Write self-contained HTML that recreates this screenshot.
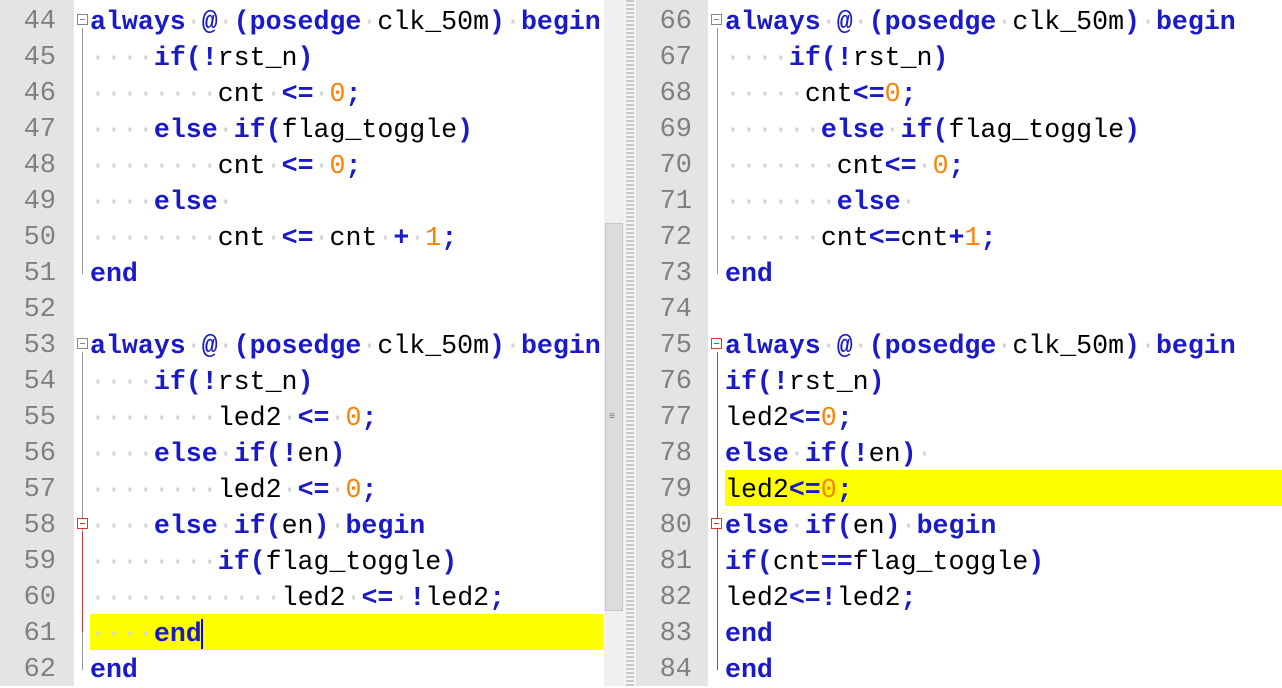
<!DOCTYPE html><html><head><meta charset="utf-8"><style>
body{margin:0;width:1282px;height:686px;overflow:hidden;background:#fff;font-family:"Liberation Mono",monospace;}
.p{position:absolute;top:0;height:686px;}
.g{background:#e4e4e4;}
.ln{position:absolute;left:0;width:56px;text-align:right;color:#808080;font-size:27px;line-height:36px;}
.c{position:absolute;font-size:26.6px;line-height:36px;white-space:pre;color:#000;}
.k{color:#1a1ac8;font-weight:bold}
.n{color:#ff8000}
.d{color:#d4d4d4}
.hl{position:absolute;background:#ffff00;height:36px}
.fl{position:absolute;width:1px}
</style></head><body>
<div class="p g" style="left:0;width:74px"></div>
<div class="p" style="left:604px;width:20px;background:#f0f0f0"></div>
<div style="position:absolute;left:605px;top:223px;width:18px;height:388px;background:#dcdcdc;border:1px solid #c8c8c8;box-sizing:border-box"></div>
<div style="position:absolute;left:609px;top:412px;color:#777;font-size:10px">≡</div>
<div class="p" style="left:624px;width:12px;background:repeating-linear-gradient(#c8c8c8 0 2px,#f4f4f4 2px 4px);border-left:2px solid #f4f4f4;border-right:2px solid #f4f4f4;box-sizing:border-box"></div>
<div class="p g" style="left:636px;width:72px"></div>
<div class="hl" style="left:90px;top:614px;width:513px"></div>
<div class="hl" style="left:725px;top:470px;width:557px"></div>
<div class="fl" style="left:82px;top:28px;height:246px;background:#999"></div>
<div class="fl" style="left:82px;top:352px;height:318px;background:#999"></div>
<div class="fl" style="left:82px;top:532px;height:100px;background:#d33"></div>
<div class="fl" style="left:717px;top:28px;height:246px;background:#999"></div>
<div class="fl" style="left:717px;top:352px;height:318px;background:#d33"></div>
<div id="L"></div>
<script>
function s(t){return t.replace(/ /g,'<span class="d">·</span>');}
function K(t){return '<span class="k">'+t+'</span>';}
function N(t){return '<span class="n">'+t+'</span>';}
const left=[
K('always')+s(' ')+K('@')+s(' ')+K('(posedge')+s(' ')+'clk_50m'+K(')')+s(' ')+K('begin'),
s('    ')+K('if(!')+'rst_n'+K(')'),
s('        ')+'cnt'+s(' ')+K('&lt;=')+s(' ')+N('0')+K(';'),
s('    ')+K('else')+s(' ')+K('if(')+'flag_toggle'+K(')'),
s('        ')+'cnt'+s(' ')+K('&lt;=')+s(' ')+N('0')+K(';'),
s('    ')+K('else')+s(' '),
s('        ')+'cnt'+s(' ')+K('&lt;=')+s(' ')+'cnt'+s(' ')+K('+')+s(' ')+N('1')+K(';'),
K('end'),'',
K('always')+s(' ')+K('@')+s(' ')+K('(posedge')+s(' ')+'clk_50m'+K(')')+s(' ')+K('begin'),
s('    ')+K('if(!')+'rst_n'+K(')'),
s('        ')+'led2'+s(' ')+K('&lt;=')+s(' ')+N('0')+K(';'),
s('    ')+K('else')+s(' ')+K('if(!')+'en'+K(')'),
s('        ')+'led2'+s(' ')+K('&lt;=')+s(' ')+N('0')+K(';'),
s('    ')+K('else')+s(' ')+K('if(')+'en'+K(')')+s(' ')+K('begin'),
s('        ')+K('if(')+'flag_toggle'+K(')'),
s('            ')+'led2'+s(' ')+K('&lt;=')+s(' ')+K('!')+'led2'+K(';'),
s('    ')+K('end')+'<span style="border-left:2px solid #00f;margin-left:-1px"></span>',
K('end')];
const right=[
K('always')+s(' ')+K('@')+s(' ')+K('(posedge')+s(' ')+'clk_50m'+K(')')+s(' ')+K('begin'),
s('    ')+K('if(!')+'rst_n'+K(')'),
s('     ')+'cnt'+K('&lt;=')+N('0')+K(';'),
s('      ')+K('else')+s(' ')+K('if(')+'flag_toggle'+K(')'),
s('       ')+'cnt'+K('&lt;=')+s(' ')+N('0')+K(';'),
s('       ')+K('else')+s(' '),
s('      ')+'cnt'+K('&lt;=')+'cnt'+K('+')+N('1')+K(';'),
K('end'),'',
K('always')+s(' ')+K('@')+s(' ')+K('(posedge')+s(' ')+'clk_50m'+K(')')+s(' ')+K('begin'),
K('if(!')+'rst_n'+K(')'),
'led2'+K('&lt;=')+N('0')+K(';'),
K('else')+s(' ')+K('if(!')+'en'+K(')')+s(' '),
'led2'+K('&lt;=')+N('0')+K(';'),
K('else')+s(' ')+K('if(')+'en'+K(')')+s(' ')+K('begin'),
K('if(')+'cnt'+K('==')+'flag_toggle'+K(')'),
'led2'+K('&lt;=!')+'led2'+K(';'),
K('end'),K('end')];
let h='';
left.forEach((t,i)=>{let y=2+i*36;h+=`<div class="ln" style="top:${y+2}px">${44+i}</div><div class="c" style="left:90px;top:${y+2}px">${t}</div>`;});
right.forEach((t,i)=>{let y=2+i*36;h+=`<div class="ln" style="left:636px;top:${y+2}px">${66+i}</div><div class="c" style="left:725px;top:${y+2}px">${t}</div>`;});
[[77,14,'#888'],[77,338,'#888'],[77,518,'#d33'],[711,14,'#888'],[711,338,'#d33'],[711,518,'#d33']].forEach(a=>{h+=`<div style="position:absolute;left:${a[0]}px;top:${a[1]}px;width:9px;height:9px;border:1px solid ${a[2]};background:#fff"><div style="position:absolute;left:2px;top:4px;width:5px;height:1px;background:${a[2]}"></div></div>`;});
document.getElementById('L').innerHTML=h;
</script>
</body></html>
